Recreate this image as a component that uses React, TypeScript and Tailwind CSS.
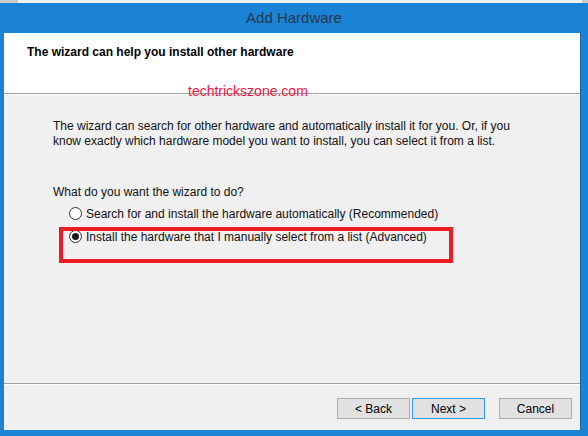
import React from "react";

const ui = { fontFamily: '"Liberation Sans", Arial, sans-serif' };

function Radio({ checked, label }: { checked?: boolean; label: string }) {
  return (
    <label className="flex items-center h-[15px] gap-[4px]">
      <span className="w-[13px] h-[13px] rounded-full border border-[#333] bg-white flex items-center justify-center">
        {checked && <span className="w-[7px] h-[7px] rounded-full bg-[#1a1a1a]" />}
      </span>
      <span>{label}</span>
    </label>
  );
}

function Button({ children, focused }: { children: React.ReactNode; focused?: boolean }) {
  return (
    <button
      className={
        "w-[73px] h-[21px] text-[12px] text-black bg-[#e1e1e1] border flex items-center justify-center " +
        (focused ? "border-[#3399ff]" : "border-[#adadad]")
      }
    >
      {children}
    </button>
  );
}

export default function App() {
  return (
    <div className="w-[588px] h-[436px] bg-[#1a83d6] flex flex-col overflow-hidden relative" style={ui}>
      {/* strip of the window behind */}
      <div className="h-[3px] bg-[#f3f3f3] flex">
        <div className="w-[18px] bg-[#c9c9c9]" />
        <div className="flex-1" />
        <div className="w-[6px] bg-[#c9c9c9]" />
      </div>

      {/* title bar */}
      <div className="h-[30px] flex items-center justify-center text-[15px] text-[#26374a]">
        Add Hardware
      </div>

      {/* client area */}
      <div className="flex-1 ml-[4px] mr-[7px] mb-[6px] bg-[#f0f0f0] flex flex-col text-[12px] text-[#111] border-r border-[#1467a8]">
        <div className="h-[61px] bg-white border-b border-[#a0a0a0] shadow-[0_1px_0_#ffffff] pl-[23px] pt-[10px]">
          <div className="font-bold text-[12px] text-black">The wizard can help you install other hardware</div>
        </div>

        <div className="flex-1 pl-[49px] pt-[25px]">
          <p className="leading-[15px] w-[470px]">
            The wizard can search for other hardware and automatically install it for you. Or, if you know exactly
            which hardware model you want to install, you can select it from a list.
          </p>
          <p className="leading-[15px] mt-[36px]">What do you want the wizard to do?</p>
          <div className="pl-[16px] mt-[6px] flex flex-col gap-[8px]">
            <Radio label="Search for and install the hardware automatically (Recommended)" />
            <Radio checked label="Install the hardware that I manually select from a list (Advanced)" />
          </div>
        </div>

        <div className="h-[47px] border-t border-[#a0a0a0] shadow-[inset_0_1px_0_#ffffff] flex pt-[14px] pl-[333px] gap-[2px]">
          <Button>&lt; Back</Button>
          <Button focused>Next &gt;</Button>
          <div className="w-[10px]" />
          <Button>Cancel</Button>
        </div>
      </div>

      {/* watermark */}
      <div className="absolute left-[188px] top-[81px] text-[14px] text-[#f5143c]">techtrickszone.com</div>

      {/* highlight box */}
      <div className="absolute left-[59px] top-[227px] w-[394px] h-[36px] border-4 border-[#ed1c24]" />
    </div>
  );
}
